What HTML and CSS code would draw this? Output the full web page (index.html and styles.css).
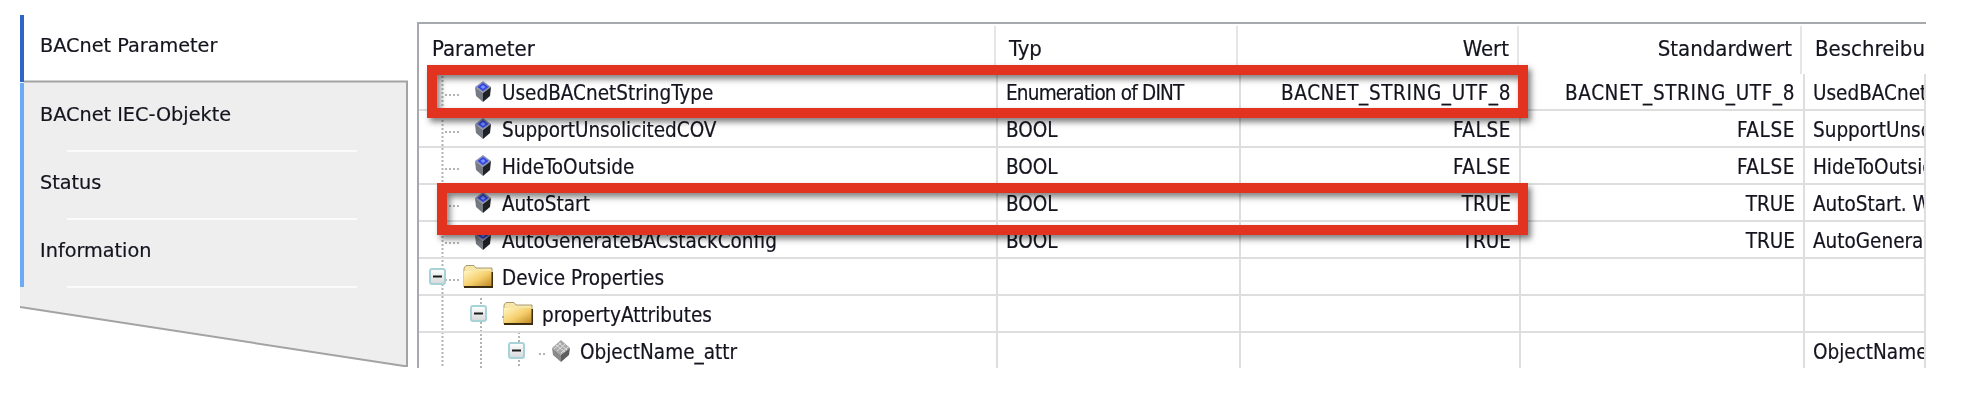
FILE: index.html
```html
<!DOCTYPE html>
<html lang="de">
<head>
<meta charset="utf-8">
<title>BACnet Parameter</title>
<link rel="stylesheet" href="styles.css">
</head>
<body>
<svg class="defs" width="0" height="0" aria-hidden="true">
  <defs>
    <linearGradient id="fold" x1="0" y1="0" x2="1" y2="1">
      <stop offset="0" stop-color="#fff6c4"/>
      <stop offset=".5" stop-color="#f6cf6c"/>
      <stop offset="1" stop-color="#b9801f"/>
    </linearGradient>
    <linearGradient id="boxg" x1="0" y1="0" x2="0" y2="1">
      <stop offset="0" stop-color="#ffffff"/>
      <stop offset="1" stop-color="#d5d8da"/>
    </linearGradient>
    <symbol id="cube" viewBox="0 0 16 21">
      <path d="M8 0 16 6 8 12 0 6Z" fill="#8e93b4"/>
      <path d="M8 2 13.500 6 8 10 2.500 6Z" fill="#2f46e6"/>
      <path d="M8 4 10.500 6 8 8 5.500 6Z" fill="#7d92ff"/>
      <path d="M0 6 8 12V21L1 15Z" fill="#767a82"/>
      <path d="M16 6 8 12V21L15 15Z" fill="#1f2126"/>
    </symbol>
    <symbol id="cube-grey" viewBox="0 0 18 22">
      <path d="M9 0 18 8 9 15 0 8Z" fill="#a8a8a8"/>
      <path d="M0 8 9 15V22L1 15Z" fill="#8a8a8a"/>
      <path d="M18 8 9 15V22L17 15Z" fill="#5e5e5e"/>
      <path d="M4 5 13 12M7 3 15 10M2 9 9 3M5 11 13 4M9 13 16 7" stroke="#e0e0e0" stroke-width="1" fill="none"/>
    </symbol>
    <symbol id="folder" viewBox="0 0 30 23">
      <path d="M1 3 3 .5H11L13 3H29V22H1Z" fill="#f7e6a8" stroke="#a89a70"/>
      <path d="M1 6H29V22.500H1Z" fill="url(#fold)"/>
      <path d="M1 22H29.500V7" fill="none" stroke="#3a2c10" stroke-width="2"/>
    </symbol>
    <symbol id="minus" viewBox="0 0 17 17">
      <rect x="1" y="1" width="15" height="15" rx="2" fill="url(#boxg)" stroke="#a6d2d8" stroke-width="2"/>
      <rect x="4" y="7.500" width="9" height="2" fill="#1c1c1c"/>
    </symbol>
  </defs>
</svg>

<main class="page">
  <nav class="sidebar">
    <svg class="tab-panel" width="388" height="352" aria-hidden="true">
      <path d="M0 66.500H387V351H384L0 292Z" fill="#eeeeee"/>
      <path d="M4 66.500H387V351H384L0 292" fill="none" stroke="#a3a3a3" stroke-width="2"/>
    </svg>
    <a class="tab tab-active">BACnet Parameter</a>
    <a class="tab">BACnet IEC-Objekte</a>
    <a class="tab">Status</a>
    <a class="tab">Information</a>
  </nav>

  <section class="table">
    <svg class="tree-lines" width="140" height="346" aria-hidden="true">
      <path d="M23.500 52V346M26 71H42M26 108H42M26 145H42M26 182H42M26 219H42M26 256H42M62 270V346M100 308V346M51 256H44M89 293H82M126 330H120" fill="none" stroke="#b4b4b4" stroke-width="2" stroke-dasharray="2 2"/>
    </svg>
    <div class="thead">
      <div class="th">Parameter</div>
      <div class="th">Typ</div>
      <div class="th th-r">Wert</div>
      <div class="th th-r">Standardwert</div>
      <div class="th">Beschreibung</div>
    </div>
    <div class="row">
      <div class="cell name lvl0"><svg class="ic-cube"><use href="#cube"/></svg>UsedBACnetStringType</div>
      <div class="cell tight">Enumeration of DINT</div>
      <div class="cell r caps">BACNET_STRING_UTF_8</div>
      <div class="cell r caps">BACNET_STRING_UTF_8</div>
      <div class="cell">UsedBACnetStringType</div>
    </div>
    <div class="row">
      <div class="cell name lvl0"><svg class="ic-cube"><use href="#cube"/></svg>SupportUnsolicitedCOV</div>
      <div class="cell">BOOL</div>
      <div class="cell r caps">FALSE</div>
      <div class="cell r caps">FALSE</div>
      <div class="cell">SupportUnsolicitedCOV</div>
    </div>
    <div class="row">
      <div class="cell name lvl0"><svg class="ic-cube"><use href="#cube"/></svg>HideToOutside</div>
      <div class="cell">BOOL</div>
      <div class="cell r caps">FALSE</div>
      <div class="cell r caps">FALSE</div>
      <div class="cell">HideToOutside</div>
    </div>
    <div class="row">
      <div class="cell name lvl0"><svg class="ic-cube"><use href="#cube"/></svg>AutoStart</div>
      <div class="cell">BOOL</div>
      <div class="cell r">TRUE</div>
      <div class="cell r">TRUE</div>
      <div class="cell">AutoStart. Wenn</div>
    </div>
    <div class="row">
      <div class="cell name lvl0"><svg class="ic-cube"><use href="#cube"/></svg>AutoGenerateBACstackConfig</div>
      <div class="cell">BOOL</div>
      <div class="cell r">TRUE</div>
      <div class="cell r">TRUE</div>
      <div class="cell">AutoGenerateBACstackConfig</div>
    </div>
    <div class="row">
      <div class="cell name fold0"><svg class="ic-minus"><use href="#minus"/></svg><svg class="ic-folder"><use href="#folder"/></svg>Device Properties</div>
      <div class="cell"></div><div class="cell"></div><div class="cell"></div><div class="cell"></div>
    </div>
    <div class="row">
      <div class="cell name fold1"><svg class="ic-minus"><use href="#minus"/></svg><svg class="ic-folder"><use href="#folder"/></svg>propertyAttributes</div>
      <div class="cell"></div><div class="cell"></div><div class="cell"></div><div class="cell"></div>
    </div>
    <div class="row row-last">
      <div class="cell name obj"><svg class="ic-minus"><use href="#minus"/></svg><svg class="ic-grey"><use href="#cube-grey"/></svg>ObjectName_attr</div>
      <div class="cell"></div><div class="cell"></div><div class="cell"></div>
      <div class="cell">ObjectName_attr</div>
    </div>
  </section>

  <div class="mark mark-a"></div>
  <div class="mark mark-b"></div>
</main>
</body>
</html>
```
FILE: styles.css
```css
* { box-sizing: border-box; }
html, body { margin: 0; background: #fff; }
.defs { position: absolute; }

.page {
  position: relative;
  display: flex;
  align-items: flex-start;
  gap: 9px;
  width: 1964px;
  height: 418px;
  padding-left: 20px;
  overflow: hidden;
  filter: blur(0.55px);
  font-family: "DejaVu Sans", "Noto Sans", sans-serif;
  color: #14141f;
  -webkit-text-stroke: 0.2px #14141f;
}

/* left tabs */
.sidebar {
  position: relative;
  flex: none;
  width: 388px;
  margin-top: 15px;
  display: flex;
  flex-direction: column;
  font-size: 19.250px;
}
.tab-panel { position: absolute; left: 0; top: 0; }
.tab {
  position: relative;
  display: flex;
  align-items: center;
  height: 68px;
  padding: 0 0 6px 16px;
  border-left: 4px solid #6caaf6;
}
.tab::after {
  content: "";
  position: absolute;
  left: 43px;
  bottom: -1px;
  width: 290px;
  height: 2px;
  background: #fbfbfb;
}
.tab-active { height: 67px; margin-bottom: 1px; border-left-color: #2d66c8; }
.tab-active::after { display: none; }

/* table */
.table {
  position: relative;
  flex: none;
  width: 1509px;
  height: 346px;
  margin-top: 22px;
  border-top: 2px solid #a6a9ad;
  border-left: 2px solid #a6a9ad;
  overflow: hidden;
  font-size: 20.500px;
  font-stretch: condensed;
}
.tree-lines { position: absolute; left: 0; top: 0; }
.thead, .row { position: relative; display: grid; }
.thead {
  grid-template-columns: 577px 242px 281px 283px 1fr;
  height: 50px;
  padding-top: 2px;
  font-size: 22px;
}
.th {
  display: flex;
  align-items: center;
  padding: 0 8px 4px 13px;
  border-right: 2px solid #e6e6e6;
}
.th-r { justify-content: flex-end; }
.row {
  grid-template-columns: 579px 243px 280px 284px 1fr;
  height: 37px;
  border-bottom: 2px solid #dedede;
}
.row-last { height: 35px; border-bottom: 0; }
.cell {
  display: flex;
  align-items: center;
  padding: 2px 8px 0;
  border-right: 2px solid #dedede;
  white-space: nowrap;
  overflow: hidden;
}
.r { justify-content: flex-end; }
.tight { letter-spacing: -0.8px; }
.caps { letter-spacing: 0.6px; }
.name { overflow: visible; }
.lvl0 { padding-left: 56px; }
.fold0 { padding-left: 10px; }
.fold0 .ic-folder { margin-left: 17px; }
.fold1 { padding-left: 51px; }
.obj { padding-left: 89px; }
.name svg { position: relative; top: -1px; }

.ic-cube { width: 16px; height: 21px; margin-right: 11px; flex: none; }
.ic-grey { width: 18px; height: 22px; margin: 0 10px 0 27px; flex: none; }
.ic-minus { width: 17px; height: 17px; flex: none; }
.ic-folder { width: 30px; height: 23px; margin: 0 9px 0 16px; flex: none; }

/* red callouts */
.mark {
  position: absolute;
  border: 10.500px solid #e1331f;
  box-shadow: 3px 4px 6px rgba(0, 0, 0, .5), inset 3px 4px 6px rgba(0, 0, 0, .5);
}
.mark-a { left: 427px; top: 65px; width: 1101px; height: 53px; }
.mark-b { left: 437px; top: 183px; width: 1091px; height: 52px; }
```
